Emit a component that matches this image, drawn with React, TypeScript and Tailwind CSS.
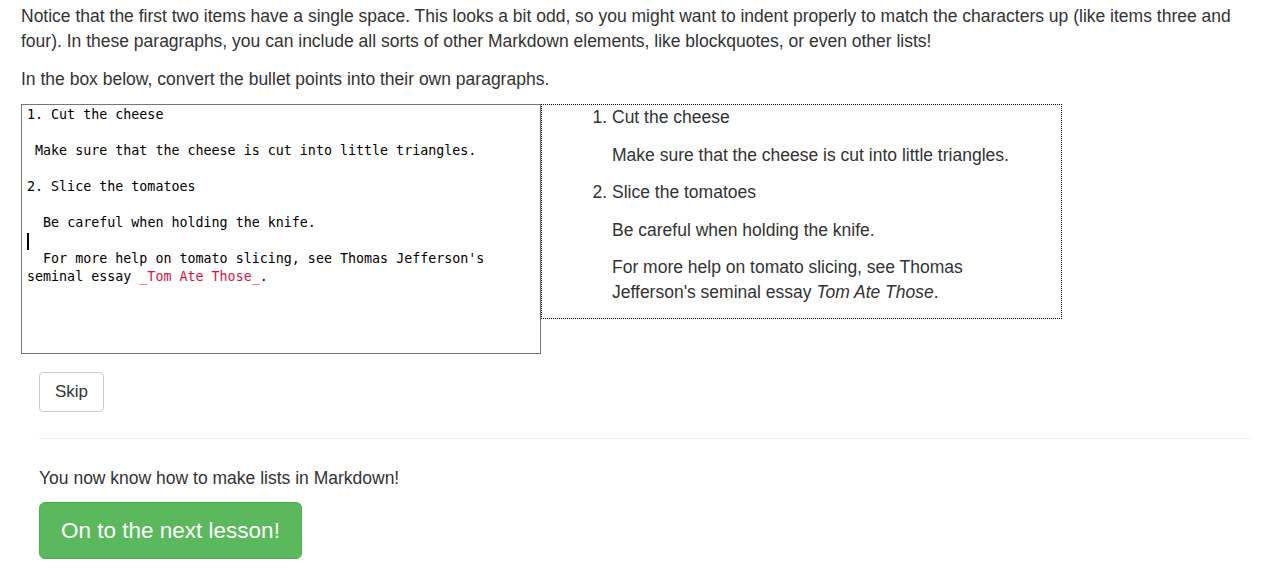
export default function App() {
  const sans = { fontFamily: '"Liberation Sans", Arial, sans-serif' };
  return (
    <div className="min-h-[585px] bg-white text-[#333]" style={sans}>
      <div className="pl-[21px] pr-[11px] pt-[4px]">
        <p className="text-[17.5px] leading-[25px]">
          Notice that the first two items have a single space. This looks a bit odd, so you might want to indent properly to match the characters up (like items three and four). In these paragraphs, you can include all sorts of other Markdown elements, like blockquotes, or even other lists!
        </p>
        <p className="mt-[13px] text-[17.5px] leading-[25px]">
          In the box below, convert the bullet points into their own paragraphs.
        </p>

        <div className="mt-[12px] flex items-start">
          <div
            className="h-[250px] w-[520px] shrink-0 border border-[#767676] px-[5px] pt-[1px] text-[13.33px] leading-[18px] whitespace-pre-wrap text-black"
            style={{ fontFamily: '"DejaVu Sans Mono", "Liberation Mono", monospace' }}
          >
            <div>1. Cut the cheese</div>
            <div>&nbsp;</div>
            <div> Make sure that the cheese is cut into little triangles.</div>
            <div>&nbsp;</div>
            <div>2. Slice the tomatoes</div>
            <div>&nbsp;</div>
            <div>  Be careful when holding the knife.</div>
            <div className="flex h-[18px] items-center">
              <span className="inline-block h-[17px] w-[2px] bg-black" />
            </div>
            <div>
              {"  For more help on tomato slicing, see Thomas Jefferson's seminal essay "}
              <span className="text-[#dd1144]">_Tom Ate Those_</span>.
            </div>
          </div>

          <div className="w-[521px] shrink-0 border border-dotted border-black text-[17.5px] leading-[25px]">
            <ol className="list-decimal pl-[70px] pr-[39px]">
              <li className="mb-[12.5px]">
                <p className="mb-[12.5px]">Cut the cheese</p>
                <p>Make sure that the cheese is cut into little triangles.</p>
              </li>
              <li className="mb-[12.5px]">
                <p className="mb-[12.5px]">Slice the tomatoes</p>
                <p className="mb-[12.5px]">Be careful when holding the knife.</p>
                <p>
                  For more help on tomato slicing, see Thomas Jefferson's seminal essay <em>Tom Ate Those</em>.
                </p>
              </li>
            </ol>
          </div>
        </div>
      </div>

      <div className="pl-[39px] pr-[11px]">
        <button className="mt-[18px] h-[40px] rounded-[4px] border border-[#ccc] bg-white px-[15px] text-[17px] text-[#333]">
          Skip
        </button>
        <hr className="mt-[26px] border-t border-[#eee]" />
        <p className="mt-[27px] text-[17.5px] leading-[24px]">You now know how to make lists in Markdown!</p>
        <button className="mt-[12px] h-[57px] rounded-[6px] border border-[#4cae4c] bg-[#5cb85c] px-[21px] text-[22.5px] text-white">
          On to the next lesson!
        </button>
      </div>
    </div>
  );
}
